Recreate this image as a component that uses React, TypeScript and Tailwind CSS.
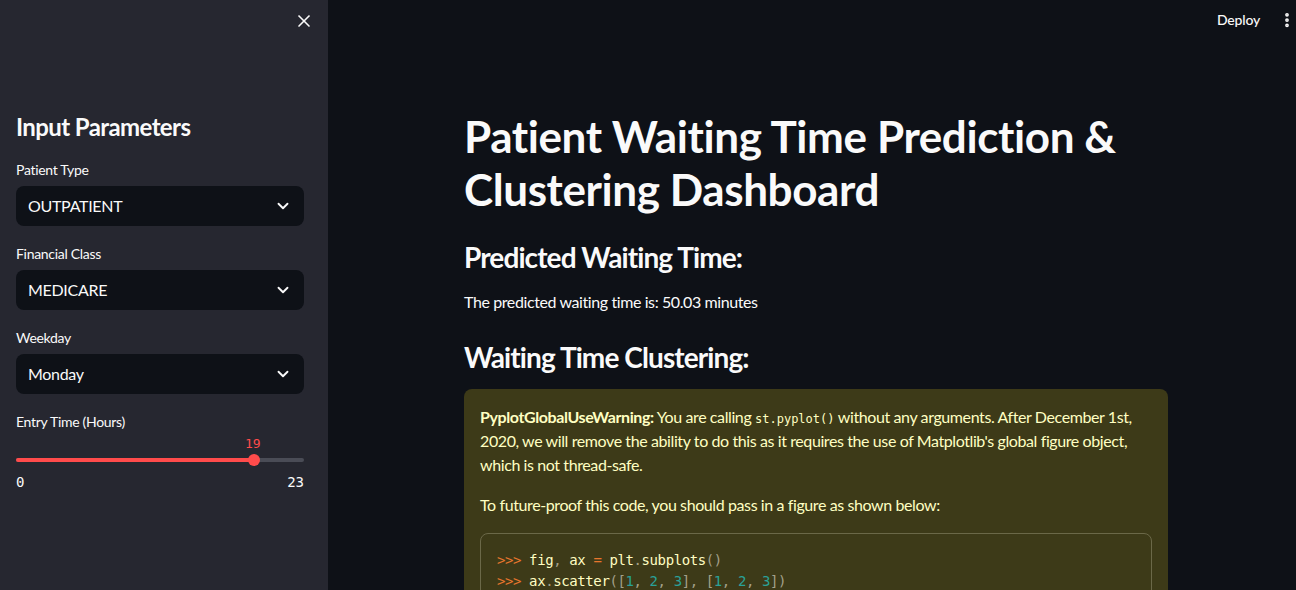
import { ChevronDown, X, EllipsisVertical } from "lucide-react";

const sans = "font-['Lato','Noto_Sans',sans-serif]";
const mono = "font-['DejaVu_Sans_Mono','Liberation_Mono',monospace]";

function Select({ label, value }: { label: string; value: string }) {
    return (
        <div className="mb-[18px]">
            <div className="mb-[6px] h-5 text-sm leading-5 tracking-[-0.3px] text-[#fafafa]">{label}</div>
            <div className="flex h-10 items-center justify-between rounded-lg bg-[#0e1117] pl-3 pr-3">
                <span className="text-base tracking-[-0.3px] text-[#fafafa]">{value}</span>
                <ChevronDown size={18} strokeWidth={2.5} className="text-[#fafafa]" />
            </div>
        </div>
    );
}

function Sidebar() {
    return (
        <aside className="h-full w-[328px] shrink-0 bg-[#262730] pl-4 pr-6">
            <div className="flex h-[42px] items-center justify-end">
                <X size={20} strokeWidth={2} className="mr-[-10px] text-[#fafafa]" />
            </div>
            <h2 className="mt-[69px] mb-[17px] text-2xl font-bold leading-[32px] tracking-[-0.6px] text-[#fafafa]">Input Parameters</h2>
            <Select label="Patient Type" value="OUTPATIENT" />
            <Select label="Financial Class" value="MEDICARE" />
            <Select label="Weekday" value="Monday" />
            <div className="h-5 text-sm leading-5 tracking-[-0.3px] text-[#fafafa]">Entry Time (Hours)</div>
            <div className="relative h-[40px]">
                <span className={`${mono} absolute left-[229px] top-[3px] text-[13px] leading-[18px] text-[#ff4b4b]`}>19</span>
                <div className="absolute left-0 right-0 top-[26px] h-1 rounded-full bg-[#4a4c56]" />
                <div className="absolute left-0 top-[26px] h-1 w-[238px] rounded-full bg-[#ff4b4b]" />
                <div className="absolute left-[232px] top-[22px] h-3 w-3 rounded-full bg-[#ff4b4b]" />
            </div>
            <div className={`${mono} flex justify-between text-sm leading-5 text-[#fafafa]`}>
                <span>0</span>
                <span>23</span>
            </div>
        </aside>
    );
}

function Code() {
    const p = "text-[#e8762d]";
    const g = "text-[#a3a08a]";
    const n = "text-[#2aa198]";
    return (
        <div className={`${mono} mt-4 rounded-lg border border-[#6b6848] px-4 pt-[16px] pb-4 text-sm leading-[21px] text-[#fffdc2]`}>
            <div>
                <span className={p}>&gt;&gt;&gt;</span> fig<span className={g}>,</span> ax <span className={p}>=</span> plt<span className={g}>.</span>subplots<span className={g}>()</span>
            </div>
            <div>
                <span className={p}>&gt;&gt;&gt;</span> ax<span className={g}>.</span>scatter<span className={g}>([</span><span className={n}>1</span><span className={g}>,</span> <span className={n}>2</span><span className={g}>,</span> <span className={n}>3</span><span className={g}>],</span> <span className={g}>[</span><span className={n}>1</span><span className={g}>,</span> <span className={n}>2</span><span className={g}>,</span> <span className={n}>3</span><span className={g}>])</span>
            </div>
        </div>
    );
}

export default function App() {
    return (
        <div className={`${sans} flex h-[590px] w-[1296px] overflow-hidden bg-[#0e1117] text-[#fafafa]`}>
            <Sidebar />
            <main className="relative flex-1">
                <div className="absolute right-0 top-0 flex h-10 items-center gap-[18px] pr-0">
                    <span className="text-sm font-medium tracking-[-0.2px] text-[#fafafa]">Deploy</span>
                    <EllipsisVertical size={18} strokeWidth={3} className="text-[#fafafa]" />
                </div>
                <div className="ml-[136px] w-[704px] pt-[110px]">
                    <h1 className="text-[44px] font-bold leading-[53px] tracking-[-0.4px] text-[#fafafa]">
                        Patient Waiting Time Prediction &amp; Clustering Dashboard
                    </h1>
                    <h3 className="mt-[23px] text-[28px] font-bold leading-[36px] tracking-[-0.9px]">Predicted Waiting Time:</h3>
                    <p className="mt-[15px] text-base leading-6 tracking-[-0.4px]">The predicted waiting time is: 50.03 minutes</p>
                    <h3 className="mt-[25px] text-[28px] font-bold leading-[36px] tracking-[-0.9px]">Waiting Time Clustering:</h3>
                    <div className="mt-[14px] rounded-lg bg-[#3d3a18] px-4 pt-4 pb-4 text-base leading-6 tracking-[-0.4px] text-[#ffffc2]">
                        <p>
                            <strong className="font-bold">PyplotGlobalUseWarning:</strong> You are calling{" "}
                            <code className={`${mono} text-[12px] leading-none tracking-normal`}>st.pyplot()</code> without any arguments. After December 1st,
                            2020, we will remove the ability to do this as it requires the use of Matplotlib's global figure object,
                            which is not thread-safe.
                        </p>
                        <p className="mt-4">To future-proof this code, you should pass in a figure as shown below:</p>
                        <Code />
                    </div>
                </div>
            </main>
        </div>
    );
}
